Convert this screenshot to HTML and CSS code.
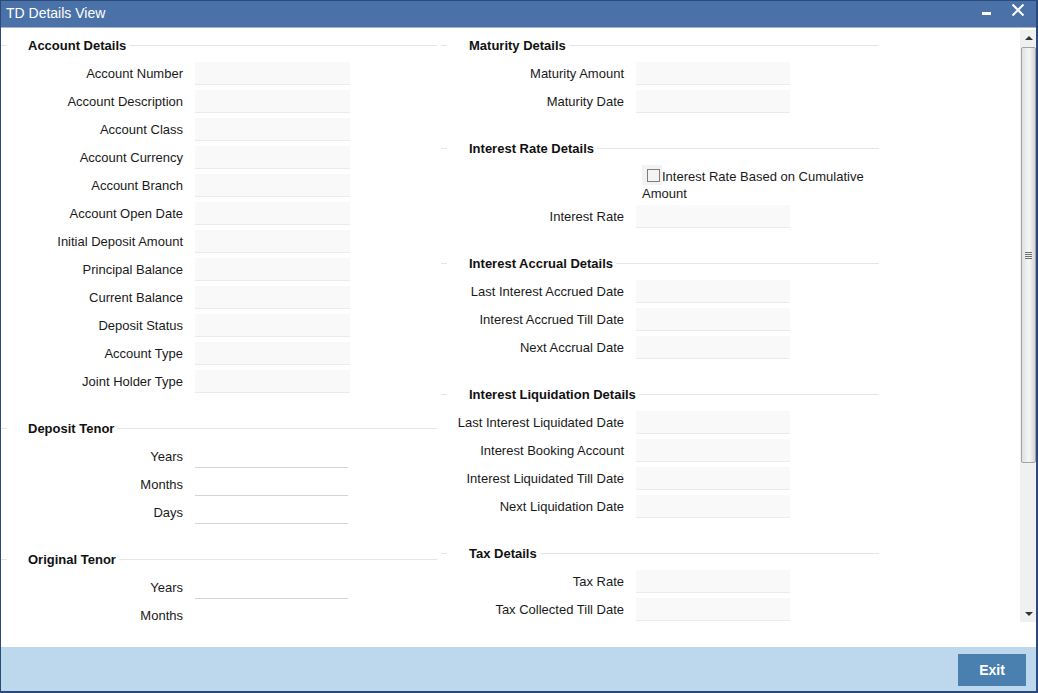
FILE: index.html
```html
<!DOCTYPE html>
<html lang="en">
<head>
    <meta charset="UTF-8">
    <title>TD Details View</title>
    <link rel="stylesheet" href="styles.css">
</head>
<body>
    <div class="window">
        <div class="titlebar">
            <span class="title">TD Details View</span>
            <div class="controls">
                <svg class="ctl" width="16" height="16" viewBox="0 0 16 16"><rect x="3" y="10" width="9" height="3" fill="#fff"/></svg>
                <svg class="ctl" width="16" height="16" viewBox="0 0 16 16"><path d="M2.5 2.5 L13.5 13.5 M13.5 2.5 L2.5 13.5" stroke="#fff" stroke-width="2"/></svg>
            </div>
        </div>

        <div class="main">
            <div class="pane">
                <div class="col col-left">
                    <section class="sec">
                        <h2 class="sec-head"><span>Account Details</span></h2>
                        <div class="row"><label class="label">Account Number</label><div class="field"></div></div>
                        <div class="row"><label class="label">Account Description</label><div class="field"></div></div>
                        <div class="row"><label class="label">Account Class</label><div class="field"></div></div>
                        <div class="row"><label class="label">Account Currency</label><div class="field"></div></div>
                        <div class="row"><label class="label">Account Branch</label><div class="field"></div></div>
                        <div class="row"><label class="label">Account Open Date</label><div class="field"></div></div>
                        <div class="row"><label class="label">Initial Deposit Amount</label><div class="field"></div></div>
                        <div class="row"><label class="label">Principal Balance</label><div class="field"></div></div>
                        <div class="row"><label class="label">Current Balance</label><div class="field"></div></div>
                        <div class="row"><label class="label">Deposit Status</label><div class="field"></div></div>
                        <div class="row"><label class="label">Account Type</label><div class="field"></div></div>
                        <div class="row"><label class="label">Joint Holder Type</label><div class="field"></div></div>
                    </section>
                    <section class="sec">
                        <h2 class="sec-head"><span>Deposit Tenor</span></h2>
                        <div class="row"><label class="label">Years</label><div class="field field-line"></div></div>
                        <div class="row"><label class="label">Months</label><div class="field field-line"></div></div>
                        <div class="row"><label class="label">Days</label><div class="field field-line"></div></div>
                    </section>
                    <section class="sec">
                        <h2 class="sec-head"><span>Original Tenor</span></h2>
                        <div class="row"><label class="label">Years</label><div class="field field-line"></div></div>
                        <div class="row"><label class="label">Months</label><div class="field field-line"></div></div>
                    </section>
                </div>

                <div class="col col-right">
                    <section class="sec">
                        <h2 class="sec-head"><span>Maturity Details</span></h2>
                        <div class="row"><label class="label">Maturity Amount</label><div class="field"></div></div>
                        <div class="row"><label class="label">Maturity Date</label><div class="field"></div></div>
                    </section>
                    <section class="sec">
                        <h2 class="sec-head"><span>Interest Rate Details</span></h2>
                        <div class="row row-check">
                            <span class="label"></span>
                            <div class="check-wrap">
                                <span class="check-bg"><span class="check-box"></span></span>
                                Interest Rate Based on Cumulative Amount
                            </div>
                        </div>
                        <div class="row"><label class="label">Interest Rate</label><div class="field"></div></div>
                    </section>
                    <section class="sec">
                        <h2 class="sec-head"><span>Interest Accrual Details</span></h2>
                        <div class="row"><label class="label">Last Interest Accrued Date</label><div class="field"></div></div>
                        <div class="row"><label class="label">Interest Accrued Till Date</label><div class="field"></div></div>
                        <div class="row"><label class="label">Next Accrual Date</label><div class="field"></div></div>
                    </section>
                    <section class="sec">
                        <h2 class="sec-head"><span>Interest Liquidation Details</span></h2>
                        <div class="row"><label class="label">Last Interest Liquidated Date</label><div class="field"></div></div>
                        <div class="row"><label class="label">Interest Booking Account</label><div class="field"></div></div>
                        <div class="row"><label class="label">Interest Liquidated Till Date</label><div class="field"></div></div>
                        <div class="row"><label class="label">Next Liquidation Date</label><div class="field"></div></div>
                    </section>
                    <section class="sec">
                        <h2 class="sec-head"><span>Tax Details</span></h2>
                        <div class="row"><label class="label">Tax Rate</label><div class="field"></div></div>
                        <div class="row"><label class="label">Tax Collected Till Date</label><div class="field"></div></div>
                    </section>
                </div>
            </div>

            <div class="scrollbar">
                <div class="sb-arrow sb-up"></div>
                <div class="sb-thumb"><span class="grip"></span></div>
                <div class="sb-track"></div>
                <div class="sb-arrow sb-down"></div>
            </div>
        </div>

        <div class="spacer"></div>

        <div class="footer">
            <button class="btn-exit">Exit</button>
        </div>
    </div>
</body>
</html>
```

FILE: styles.css
```css
* {
    margin: 0;
    padding: 0;
    box-sizing: border-box;
}

body {
    font-family: "Liberation Sans", Arial, sans-serif;
    font-size: 13px;
    color: #1a1a1a;
    background: #fff;
}

.window {
    width: 1038px;
    height: 693px;
    display: flex;
    flex-direction: column;
    border: 1px solid #2b4a7c;
    border-right-width: 2px;
    border-bottom-width: 2px;
    background: #fff;
}

/* title bar */
.titlebar {
    height: 27px;
    flex: none;
    display: flex;
    align-items: center;
    background: #4a72a8;
    border-bottom: 1px solid #a6b4c6;
    padding: 0 10px 0 5px;
}

.title {
    color: #fff;
    font-size: 14px;
    padding-bottom: 2px;
}

.controls {
    margin-left: auto;
    align-self: flex-start;
    display: flex;
    gap: 15px;
    padding-top: 1px;
}

.ctl {
    display: block;
}

/* form area */
.main {
    height: 594px;
    flex: none;
    display: flex;
}

.pane {
    flex: 1;
    overflow: hidden;
    display: flex;
    gap: 4px;
    padding-top: 3px;
}

.col-left {
    width: 436px;
}

.col-right {
    width: 438px;
}

.sec {
    margin-bottom: 19px;
}

.sec-head {
    display: flex;
    align-items: center;
    height: 28px;
    font-size: 13px;
    font-weight: bold;
    color: #111;
}

.sec-head::before {
    content: '';
    width: 6px;
    border-top: 1px solid #e5e5e5;
}

.sec-head span {
    padding: 0 3px 0 21px;
}

.col-right .sec-head span {
    padding-left: 22px;
}

.sec-head::after {
    content: '';
    flex: 1;
    border-top: 1px solid #e5e5e5;
}

.row {
    display: flex;
    align-items: center;
    height: 28px;
    gap: 12px;
}

.label {
    width: 183px;
    flex: none;
    text-align: right;
    line-height: 28px;
    margin-top: 2px;
    white-space: nowrap;
}

.col-left .label {
    width: 182px;
}

.field {
    width: 154px;
    height: 23px;
    background: #f9f9f9;
    border-bottom: 1px solid #ebebeb;
}

.col-left .field {
    width: 155px;
}

.col-left .field-line,
.field-line {
    width: 153px;
    background: none;
    border-bottom: 1px solid #d4d4d4;
}

.row-check {
    height: 40px;
    align-items: flex-start;
}

.row-check .label {
    margin-top: 0;
}

.check-wrap {
    margin-left: 6px;
    width: 237px;
    padding-top: 6px;
    line-height: 17px;
}

.check-bg {
    float: left;
    width: 20px;
    height: 20px;
    margin-top: -3px;
    padding: 4px 0 0 5px;
    background: #f3f3f3;
}

.check-box {
    display: block;
    width: 13px;
    height: 13px;
    border: 1px solid #7e7e7e;
    background: #f4f4f4;
}

/* scrollbar */
.scrollbar {
    width: 16px;
    flex: none;
    margin-top: 2px;
    display: flex;
    flex-direction: column;
    background: #f0f0f0;
}

.sb-arrow {
    height: 16px;
    flex: none;
    position: relative;
}

.sb-arrow::after {
    content: '';
    position: absolute;
    left: 5px;
    top: 6px;
    border-left: 4px solid transparent;
    border-right: 4px solid transparent;
}

.sb-up::after {
    border-bottom: 4px solid #333;
}

.sb-down::after {
    border-top: 4px solid #333;
}

.sb-thumb {
    height: 416px;
    flex: none;
    margin: 1px 0 0 1px;
    border: 1px solid #a3a3a3;
    border-radius: 2px;
    background: linear-gradient(to right, #e1e1e1, #f6f6f6 55%, #d6d6d6);
    display: flex;
    align-items: center;
    justify-content: center;
}

.grip {
    width: 7px;
    height: 7px;
    background: repeating-linear-gradient(to bottom, #6e6e6e 0, #6e6e6e 1px, transparent 1px, transparent 2px);
}

.sb-track {
    flex: 1;
}

.spacer {
    height: 25px;
    flex: none;
}

/* footer */
.footer {
    flex: 1;
    background: #bdd8ec;
    display: flex;
    justify-content: flex-end;
    align-items: flex-start;
    padding: 7px 10px 0 0;
}

.btn-exit {
    width: 68px;
    height: 32px;
    border: none;
    background: #4a80af;
    color: #fff;
    font-family: "Liberation Sans", Arial, sans-serif;
    font-size: 14px;
    font-weight: bold;
    cursor: pointer;
}
```
